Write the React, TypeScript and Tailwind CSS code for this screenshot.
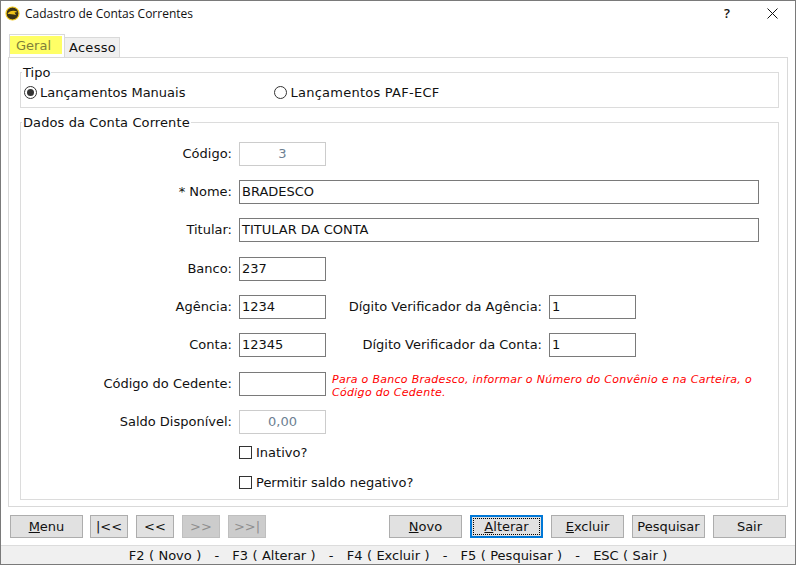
const font = "font-['DejaVu_Sans','Liberation_Sans',sans-serif]";

function Row({ label, mt, children }: { label: string; mt: string; children: React.ReactNode }) {
  return (
    <div className={`flex items-center h-6 ${mt}`}>
      <span className="w-[218px] text-right pr-[7px] pb-[2px] whitespace-nowrap">{label}</span>
      {children}
    </div>
  );
}

function Field({ value, w, disabled, center }: { value?: string; w: string; disabled?: boolean; center?: boolean }) {
  return (
    <div
      className={`h-6 shrink-0 flex items-center border px-[2px] pb-[2px] ${w} ${center ? "justify-center" : ""} ${
        disabled ? "border-[#cccccc] text-[#6d7f92]" : "border-[#7a7a7a] text-[#111111]"
      }`}
    >
      {value}
    </div>
  );
}

function Btn({ w, children, off, focus }: { w: string; children: React.ReactNode; off?: boolean; focus?: boolean }) {
  const base = `h-[23px] shrink-0 flex items-center justify-center border ${w}`;
  if (focus) {
    return (
      <div className={`${base} bg-[#e1e1e1] border-2 border-[#0078d7] p-px`}>
        <div className="w-full h-full flex items-center justify-center border border-dotted border-black">{children}</div>
      </div>
    );
  }
  return (
    <div className={`${base} ${off ? "bg-[#cccccc] border-[#bfbfbf] text-[#8f8f8f]" : "bg-[#e1e1e1] border-[#adadad]"}`}>
      {children}
    </div>
  );
}

function Check({ label, mt }: { label: string; mt: string }) {
  return (
    <div className={`flex items-center h-[18px] pl-[218px] ${mt}`}>
      <span className="w-[13px] h-[13px] border border-[#333333] bg-white mr-[4px]" />
      <span>{label}</span>
    </div>
  );
}

function Radio({ checked }: { checked?: boolean }) {
  return (
    <span className="w-[13px] h-[13px] rounded-full border border-[#333333] flex items-center justify-center mr-[3px] shrink-0">
      {checked && <span className="w-[7px] h-[7px] rounded-full bg-[#333333]" />}
    </span>
  );
}

export default function App() {
  return (
    <div className={`${font} w-[796px] h-[565px] border border-[#7a7a7a] bg-white text-[13px] leading-none text-[#111111] flex flex-col overflow-hidden`}>
      <div className="h-[25px] shrink-0 flex items-center pl-[4px]">
        <svg width="15" height="15" viewBox="0 0 15 15" className="mr-[5px]">
          <circle cx="7.5" cy="7.5" r="6.5" fill="#3a3318" stroke="#f2c81e" strokeWidth="1.2" />
          <path d="M2.5 8 C4.5 4.5 9 4 12.5 6 L9.5 6.6 L11 9 C8 8 5 8 2.5 8 Z" fill="#f0c419" />
        </svg>
        <span className="font-['Open_Sans',sans-serif] text-[12px]">Cadastro de Contas Correntes</span>
        <div className="ml-auto flex items-center">
          <span className="font-['Open_Sans',sans-serif] font-semibold text-[13px] mr-[37px]">?</span>
          <svg width="11" height="11" viewBox="0 0 11 11" className="mr-[17px]">
            <path d="M0.5 0.5 L10.5 10.5 M10.5 0.5 L0.5 10.5" stroke="#111" strokeWidth="1" fill="none" />
          </svg>
        </div>
      </div>

      <div className="flex-1 flex flex-col px-[7px]">
        <div className="h-[22px] mt-[9px] flex items-end relative z-10 pl-[1px]">
          <div className="h-[23px] w-[56px] bg-white border border-b-0 border-[#d9d9d9] pt-[1px]">
            <div className="w-[52px] h-[18px] bg-[#ffff66] text-[#7f7f3a] flex items-center pl-[6px] pt-[1px]">Geral</div>
          </div>
          <div className="h-[20px] w-[55px] bg-[#f0f0f0] border border-b-0 border-l-0 border-[#d9d9d9] flex items-center justify-center pl-[1px] tracking-[0.3px]">
            Acesso
          </div>
        </div>

        <div className="h-[450px] border border-[#d9d9d9] pl-[11px] pr-[8px] pt-[8px]">
          <fieldset className="border border-[#dcdcdc] h-[42px] pl-[3px] m-0">
            <legend className="-ml-[2px] px-[1px] leading-[13px]">Tipo</legend>
            <div className="flex items-center h-[20px] mt-[3px]">
              <Radio checked />
              <span>Lançamentos Manuais</span>
              <span className="w-[89px]" />
              <Radio />
              <span className="tracking-[0.25px]">Lançamentos PAF-ECF</span>
            </div>
          </fieldset>

          <fieldset className="border border-[#dcdcdc] h-[384px] mt-[8px] m-0">
            <legend className="ml-[1px] px-[1px] leading-[13px] tracking-[0.1px]">Dados da Conta Corrente</legend>
            <Row label="Código:" mt="mt-[13px]"><Field value="3" w="w-[87px]" disabled center /></Row>
            <Row label="* Nome:" mt="mt-[14px]"><Field value="BRADESCO" w="w-[520px]" /></Row>
            <Row label="Titular:" mt="mt-[14px]"><Field value="TITULAR DA CONTA" w="w-[520px]" /></Row>
            <Row label="Banco:" mt="mt-[15px]"><Field value="237" w="w-[87px]" /></Row>
            <Row label="Agência:" mt="mt-[14px]">
              <Field value="1234" w="w-[87px]" />
              <span className="w-[223px] text-right pr-[7px] pb-[2px] whitespace-nowrap">Dígito Verificador da Agência:</span>
              <Field value="1" w="w-[87px]" />
            </Row>
            <Row label="Conta:" mt="mt-[14px]">
              <Field value="12345" w="w-[87px]" />
              <span className="w-[223px] text-right pr-[7px] pb-[2px] whitespace-nowrap">Dígito Verificador da Conta:</span>
              <Field value="1" w="w-[87px]" />
            </Row>
            <Row label="Código do Cedente:" mt="mt-[15px]">
              <Field w="w-[87px]" />
              <p className="ml-[6px] mt-[4px] text-[11px] leading-[13px] italic tracking-[0.29px] text-[#ff0000] w-[430px]">
                Para o Banco Bradesco, informar o Número do Convênio e na Carteira, o Código do Cedente.
              </p>
            </Row>
            <Row label="Saldo Disponível:" mt="mt-[14px]"><Field value="0,00" w="w-[87px]" disabled center /></Row>
            <Check label="Inativo?" mt="mt-[9px]" />
            <Check label="Permitir saldo negativo?" mt="mt-[12px]" />
          </fieldset>
        </div>

        <div className="flex items-center mt-[8px] px-[2px]">
          <Btn w="w-[73px]"><span><u>M</u>enu</span></Btn>
          <div className="w-[7px]" />
          <Btn w="w-[38px]">|&lt;&lt;</Btn>
          <div className="w-[8px]" />
          <Btn w="w-[38px]">&lt;&lt;</Btn>
          <div className="w-[8px]" />
          <Btn w="w-[38px]" off>&gt;&gt;</Btn>
          <div className="w-[8px]" />
          <Btn w="w-[38px]" off>&gt;&gt;|</Btn>
          <div className="ml-auto flex items-center gap-[8px]">
            <Btn w="w-[73px]"><span><u>N</u>ovo</span></Btn>
            <Btn w="w-[73px]" focus><span><u>A</u>lterar</span></Btn>
            <Btn w="w-[73px]"><span><u>E</u>xcluir</span></Btn>
            <Btn w="w-[73px]">Pesquisar</Btn>
            <Btn w="w-[73px]">Sair</Btn>
          </div>
        </div>
      </div>

      <div className="h-[19px] shrink-0 bg-[#f0f0f0] border-t border-[#dcdcdc] flex items-center justify-center whitespace-pre [word-spacing:0.27px]">
        F2 ( Novo )   -   F3 ( Alterar )   -   F4 ( Excluir )   -   F5 ( Pesquisar )   -   ESC ( Sair )
      </div>
    </div>
  );
}
